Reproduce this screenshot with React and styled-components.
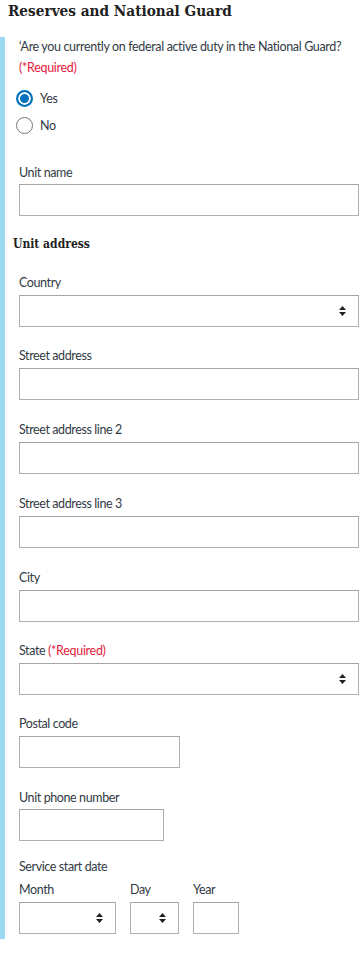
import styled, { createGlobalStyle } from 'styled-components';

const GlobalStyle = createGlobalStyle`
  body {
    margin: 0;
    background: #fff;
    font-family: 'Lato', 'Noto Sans', sans-serif;
    color: #323a45;
  }
`;

const Page = styled.div`
  width: 362px;
  padding-bottom: 21px;
`;

const Title = styled.h2`
  margin: 0;
  padding-left: 8px;
  height: 37px;
  line-height: 22px;
  font-family: 'DejaVu Serif Condensed', 'DejaVu Serif', serif;
  font-weight: bold;
  font-size: 15.2px;
  color: #212121;
`;

const Section = styled.div`
  border-left: 5px solid #9bdaf1;
  padding: 0 3px 5px 14px;
`;

const Question = styled.div`
  font-size: 12.5px;
  letter-spacing: -0.35px;
  line-height: 20px;
  white-space: nowrap;
`;

const Required = styled.span`
  color: #e31c3d;
  font-size: 12.5px;
  letter-spacing: -0.3px;
  line-height: 20px;
  display: ${p => (p.block ? 'block' : 'inline')};
  margin-top: ${p => (p.block ? '1px' : '0')};
`;

const RadioList = styled.div`
  display: flex;
  flex-direction: column;
  gap: 7px;
  margin-top: 10px;
  margin-left: -3px;
`;

const RadioRow = styled.label`
  display: flex;
  align-items: center;
  height: 20px;
  gap: 7px;
  font-size: 12.5px;
  letter-spacing: -0.3px;
`;

const RadioDot = styled.span`
  box-sizing: border-box;
  width: 17px;
  height: 17px;
  border-radius: 50%;
  border: ${p => (p.checked ? '2px solid #0071bc' : '1px solid #757575')};
  background: ${p => (p.checked ? '#0071bc' : '#fff')};
  box-shadow: ${p => (p.checked ? 'inset 0 0 0 2px #fff' : 'none')};
`;

const Field = styled.div`
  margin-top: ${p => p.top || 20}px;
  width: ${p => p.width || 340}px;
`;

const Label = styled.div`
  font-size: 12.5px;
  letter-spacing: -0.4px;
  line-height: 20px;
  margin-bottom: ${p => (p.tight ? 1 : 2)}px;
  white-space: nowrap;
`;

const SubHeading = styled.div`
  margin-top: 18px;
  margin-left: -6px;
  font-family: 'DejaVu Serif Condensed', 'DejaVu Serif', serif;
  font-weight: bold;
  font-size: 12px;
  line-height: 20px;
  color: #212121;
`;

const Input = styled.div`
  box-sizing: border-box;
  height: 32px;
  width: 100%;
  border: 1px solid #aeb0b5;
  border-top-color: #a2a4a8;
  background: #fff;
`;

const Select = styled(Input)`
  display: flex;
  align-items: center;
  justify-content: flex-end;
  padding-right: 12px;
`;

const DateRow = styled.div`
  display: flex;
  gap: 14px;
  margin-top: 3px;
`;

const DatePart = styled.div`
  width: ${p => p.width}px;
`;

const Arrows = () => (
  <svg width="7" height="10" viewBox="0 0 7 10">
    <path d="M3.5 0 L7 4 H0 Z M3.5 10 L7 6 H0 Z" fill="#212121" />
  </svg>
);

const TextField = ({ label, width, top, tight }) => (
  <Field width={width} top={top}>
    <Label tight={tight}>{label}</Label>
    <Input />
  </Field>
);

const SelectField = ({ label, top, required }) => (
  <Field top={top}>
    <Label>
      {label}
      {required && <Required>&nbsp;(*Required)</Required>}
    </Label>
    <Select>
      <Arrows />
    </Select>
  </Field>
);

const App = () => (
  <Page>
    <GlobalStyle />
    <Title>Reserves and National Guard</Title>
    <Section>
      <Question>‘Are you currently on federal active duty in the National Guard?</Question>
      <Required block>(*Required)</Required>
      <RadioList>
        <RadioRow><RadioDot checked />Yes</RadioRow>
        <RadioRow><RadioDot />No</RadioRow>
      </RadioList>
      <TextField label="Unit name" top={28} tight />
      <SubHeading>Unit address</SubHeading>
      <SelectField label="Country" top={19} />
      <TextField label="Street address" top={19} />
      <TextField label="Street address line 2" />
      <TextField label="Street address line 3" />
      <TextField label="City" />
      <SelectField label="State" top={19} required />
      <TextField label="Postal code" width={161} top={19} />
      <TextField label="Unit phone number" width={145} tight />
      <Field top={16}>
        <Label>Service start date</Label>
        <DateRow>
          <DatePart width={97}>
            <Label>Month</Label>
            <Select><Arrows /></Select>
          </DatePart>
          <DatePart width={49}>
            <Label>Day</Label>
            <Select><Arrows /></Select>
          </DatePart>
          <DatePart width={46}>
            <Label>Year</Label>
            <Input />
          </DatePart>
        </DateRow>
      </Field>
    </Section>
  </Page>
);

export default App;
